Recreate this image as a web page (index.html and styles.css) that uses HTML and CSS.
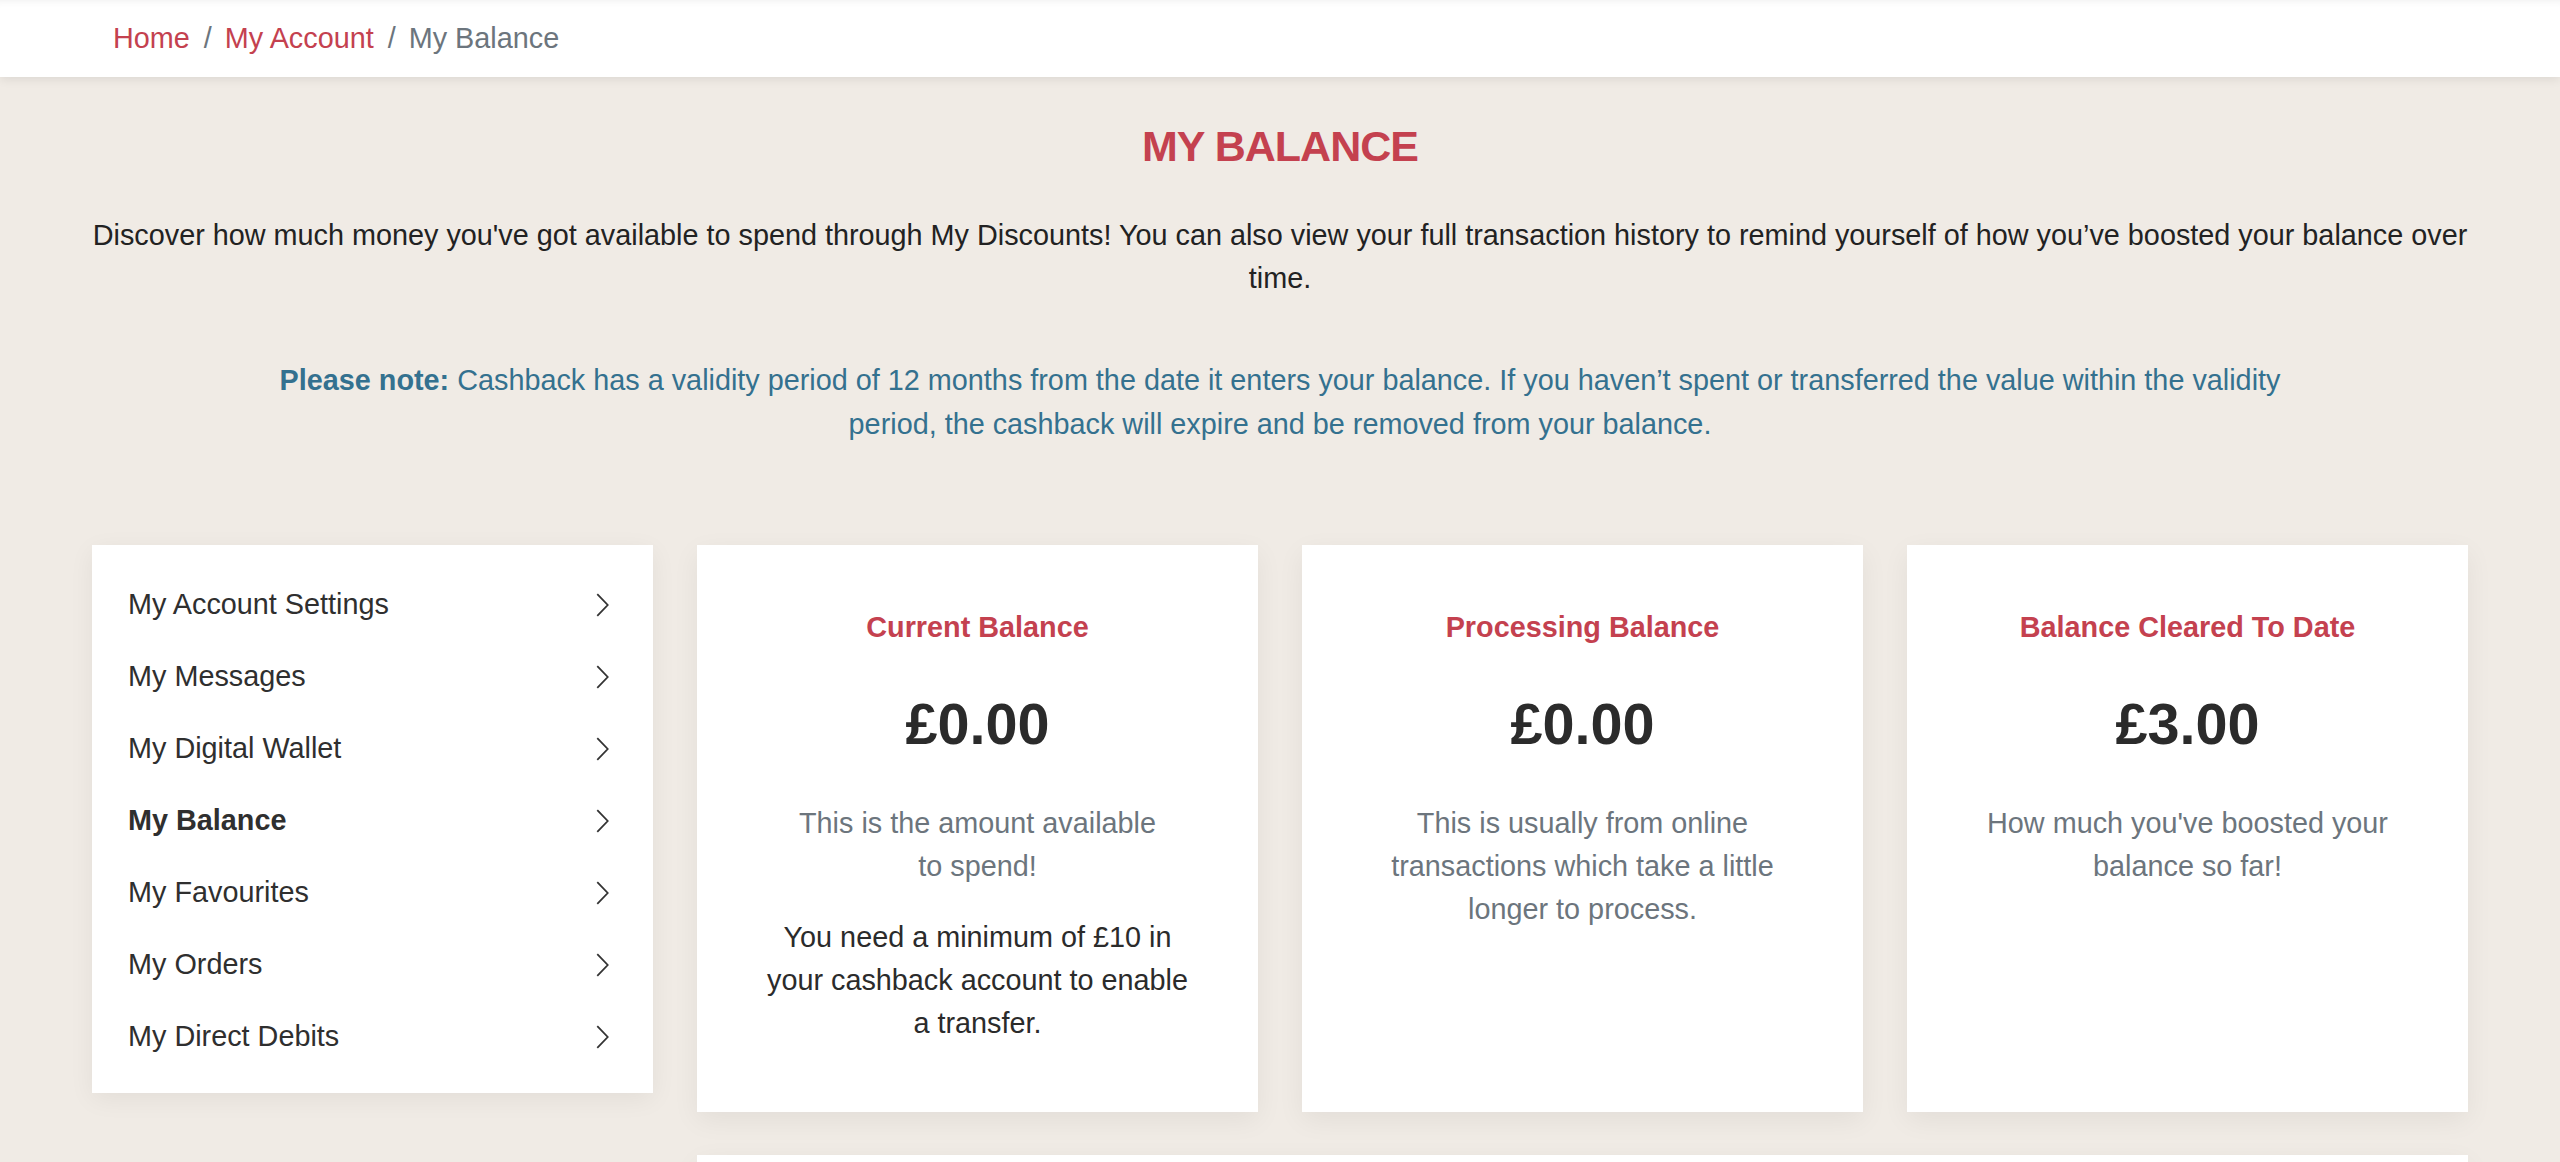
FILE: index.html
```html
<!DOCTYPE html>
<html lang="en">
<head>
<meta charset="utf-8">
<title>My Balance</title>
<link rel="stylesheet" href="styles.css">
</head>
<body>
<header class="topbar">
  <nav class="breadcrumb">
    <a class="crumb-link" href="#">Home</a>
    <span class="crumb-sep">/</span>
    <a class="crumb-link" href="#">My Account</a>
    <span class="crumb-sep">/</span>
    <span class="crumb-current">My Balance</span>
  </nav>
</header>

<main class="page">
  <h1 class="page-title">MY BALANCE</h1>
  <p class="intro">Discover how much money you've got available to spend through My Discounts! You can also view your full transaction history to remind yourself of how you’ve boosted your balance over time.</p>
  <p class="note"><strong>Please note:</strong> Cashback has a validity period of 12 months from the date it enters your balance. If you haven’t spent or transferred the value within the validity period, the cashback will expire and be removed from your balance.</p>

  <div class="layout">
    <aside class="side-menu">
      <a class="menu-item" href="#"><span>My Account Settings</span><svg class="chev" viewBox="0 0 12 23"><path d="M1 1 L11 11.5 L1 22"/></svg></a>
      <a class="menu-item" href="#"><span>My Messages</span><svg class="chev" viewBox="0 0 12 23"><path d="M1 1 L11 11.5 L1 22"/></svg></a>
      <a class="menu-item" href="#"><span>My Digital Wallet</span><svg class="chev" viewBox="0 0 12 23"><path d="M1 1 L11 11.5 L1 22"/></svg></a>
      <a class="menu-item active" href="#"><span>My Balance</span><svg class="chev" viewBox="0 0 12 23"><path d="M1 1 L11 11.5 L1 22"/></svg></a>
      <a class="menu-item" href="#"><span>My Favourites</span><svg class="chev" viewBox="0 0 12 23"><path d="M1 1 L11 11.5 L1 22"/></svg></a>
      <a class="menu-item" href="#"><span>My Orders</span><svg class="chev" viewBox="0 0 12 23"><path d="M1 1 L11 11.5 L1 22"/></svg></a>
      <a class="menu-item" href="#"><span>My Direct Debits</span><svg class="chev" viewBox="0 0 12 23"><path d="M1 1 L11 11.5 L1 22"/></svg></a>
    </aside>

    <section class="content">
      <div class="card balance">
        <h2 class="card-title">Current Balance</h2>
        <div class="amount">£0.00</div>
        <p class="desc">This is the amount available<br>to spend!</p>
        <p class="extra">You need a minimum of £10 in your cashback account to enable a transfer.</p>
      </div>
      <div class="card balance">
        <h2 class="card-title">Processing Balance</h2>
        <div class="amount">£0.00</div>
        <p class="desc">This is usually from online transactions which take a little longer to process.</p>
      </div>
      <div class="card balance">
        <h2 class="card-title">Balance Cleared To Date</h2>
        <div class="amount">£3.00</div>
        <p class="desc">How much you've boosted your balance so far!</p>
      </div>
      <div class="card history"></div>
    </section>
  </div>
</main>
</body>
</html>
```

FILE: styles.css
```css
* { box-sizing: border-box; }

html, body {
  margin: 0;
  padding: 0;
}

body {
  background: #f0ebe5;
  font-family: "Liberation Sans", Arial, Helvetica, sans-serif;
  font-size: 28.8px;
  line-height: 43.2px;
  color: #2b2b2b;
}

.topbar {
  background: #ffffff;
  height: 77px;
  box-shadow: 0 2px 10px rgba(0, 0, 0, 0.09), inset 0 8px 8px -8px rgba(0, 0, 0, 0.08);
  position: relative;
  z-index: 1;
}

.breadcrumb {
  width: 2376px;
  margin: 0 auto;
  padding: 17px 0 17px 21px;
  display: flex;
  align-items: center;
}

.crumb-link {
  color: #c4414f;
  text-decoration: none;
}

.crumb-sep {
  color: #6c757d;
  padding: 0 13px 0 14px;
}

.crumb-current {
  color: #6c757d;
}

.page {
  width: 2376px;
  margin: 0 auto;
  padding: 43px 0 0;
}

.page-title {
  margin: 0 0 42px;
  text-align: center;
  color: #c4414f;
  font-size: 43px;
  line-height: 52px;
  font-weight: 700;
  letter-spacing: -1px;
}

.intro {
  margin: 0 0 59px;
  text-align: center;
  color: #222222;
}

.note {
  max-width: 2060px;
  margin: 0 auto 99px;
  text-align: center;
  color: #34718f;
}

.note strong {
  font-weight: 700;
}

.layout {
  display: grid;
  grid-template-columns: 561px 1fr;
  column-gap: 44px;
  align-items: start;
}

.side-menu {
  background: #ffffff;
  padding: 24px 44px 20px 36px;
  box-shadow: 0 6px 24px rgba(0, 0, 0, 0.06);
  display: flex;
  flex-direction: column;
}

.menu-item {
  height: 72px;
  display: flex;
  align-items: center;
  justify-content: space-between;
  color: #2f2f2f;
  text-decoration: none;
}

.menu-item.active {
  font-weight: 700;
}

.chev {
  width: 13px;
  height: 24px;
  fill: none;
  stroke: #333333;
  stroke-width: 1.7;
}

.content {
  display: grid;
  grid-template-columns: repeat(3, 1fr);
  column-gap: 44px;
  row-gap: 43px;
}

.card {
  background: #ffffff;
  box-shadow: 0 8px 26px rgba(0, 0, 0, 0.06);
}

.balance {
  padding: 61px 60px 66px;
  text-align: center;
}

.card-title {
  margin: 0 0 41px;
  color: #c4414f;
  font-size: 28.8px;
  line-height: 43.2px;
  font-weight: 700;
}

.amount {
  margin: 0 0 43px;
  font-size: 57.6px;
  line-height: 69px;
  font-weight: 700;
  color: #2b2b2b;
}

.desc {
  margin: 0 0 27.6px;
  color: #6c757d;
}

.extra {
  margin: 0;
  color: #2b2b2b;
}

.history {
  grid-column: 1 / span 3;
  height: 320px;
}
```
